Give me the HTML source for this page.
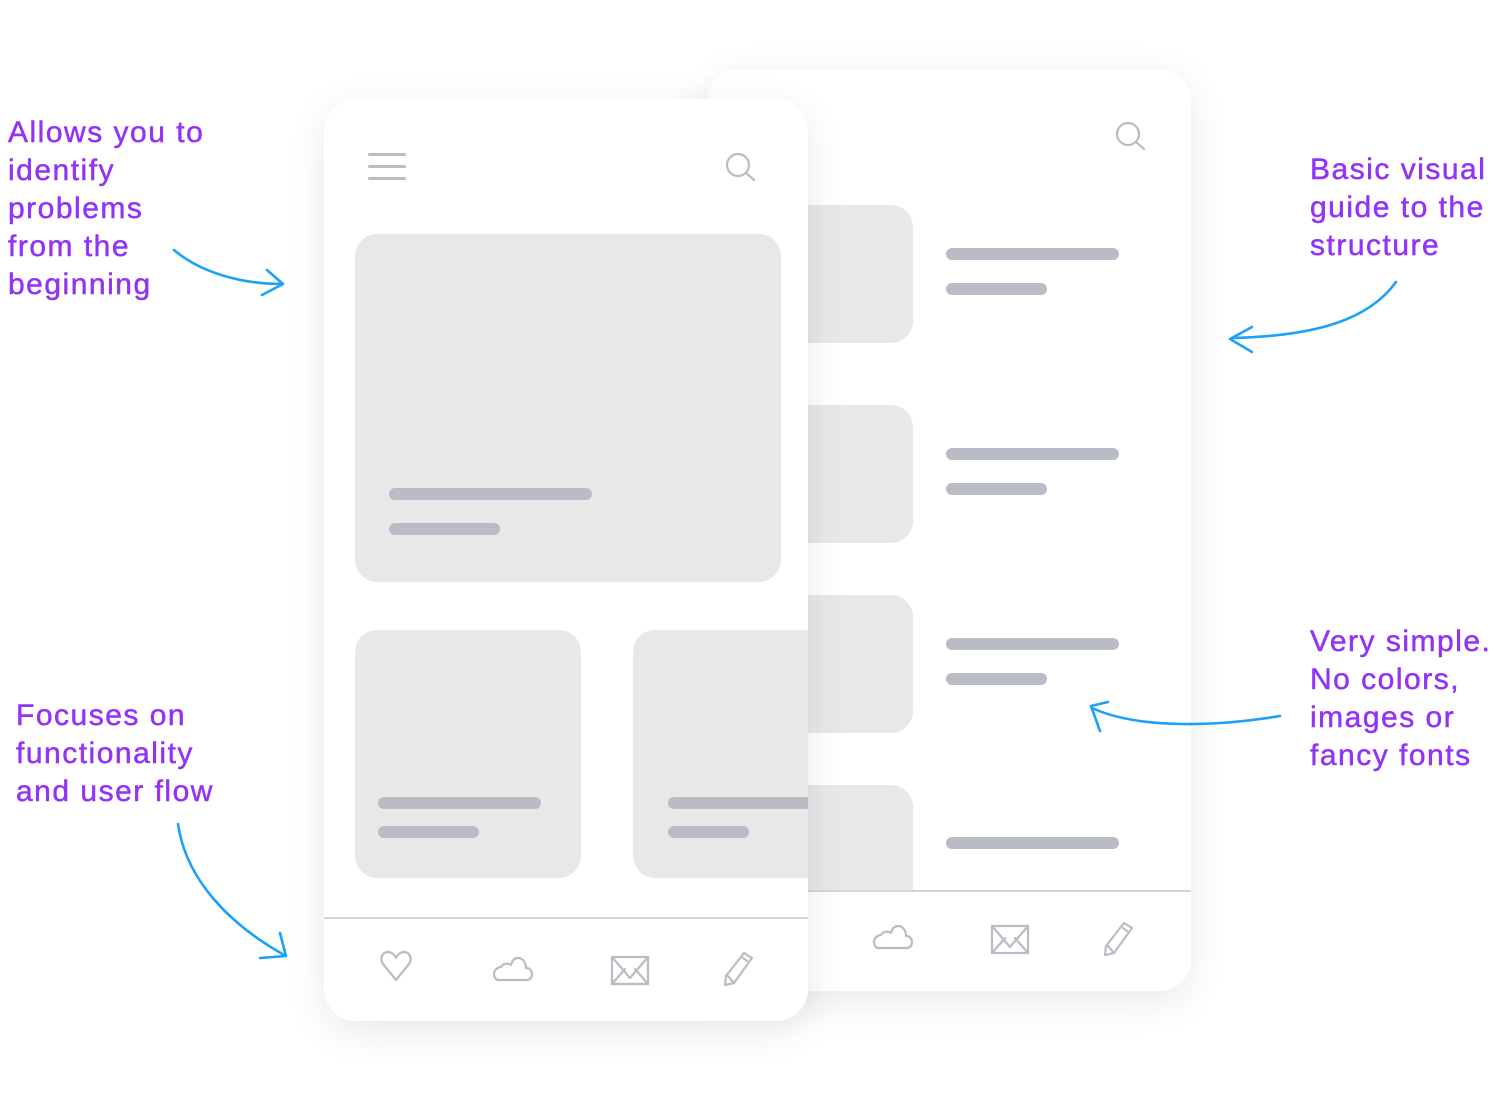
<!DOCTYPE html>
<html><head><meta charset="utf-8"><style>
body{margin:0;width:1500px;height:1100px;background:#fff;position:relative;overflow:hidden;font-family:"Liberation Sans",sans-serif}
.card{position:absolute;background:#fff;border-radius:32px;box-shadow:0 10px 40px rgba(0,0,0,0.09);overflow:hidden}
.t{position:absolute;background:#e8e8e8;border-radius:22px}
.b{position:absolute;background:#babcc5;border-radius:6px;height:12px}
.txt{position:absolute;color:#9333f5;font-size:30px;line-height:38px;letter-spacing:1.5px;white-space:nowrap;-webkit-text-stroke:0.5px #9333f5}
svg.ic{position:absolute;fill:none;stroke:#babcc5;stroke-width:2.2;stroke-linecap:round;stroke-linejoin:round}
</style></head><body>

<div class="card" style="left:707px;top:69px;width:484px;height:922px">
  <div class="t" style="left:-30px;top:136px;width:236px;height:138px"></div>
  <div class="t" style="left:-30px;top:336px;width:236px;height:138px"></div>
  <div class="t" style="left:-30px;top:526px;width:236px;height:138px"></div>
  <div class="t" style="left:-30px;top:716px;width:236px;height:160px"></div>
  <div class="b" style="left:239px;top:179px;width:173px"></div>
  <div class="b" style="left:239px;top:214px;width:101px"></div>
  <div class="b" style="left:239px;top:379px;width:173px"></div>
  <div class="b" style="left:239px;top:414px;width:101px"></div>
  <div class="b" style="left:239px;top:569px;width:173px"></div>
  <div class="b" style="left:239px;top:604px;width:101px"></div>
  <div class="b" style="left:239px;top:768px;width:173px"></div>
  <div style="position:absolute;left:0;top:821px;width:484px;height:101px;background:#fff;border-top:2px solid #d4d5da"></div>
</div>
<svg class="ic" style="left:1112px;top:118px" width="36" height="36" viewBox="0 0 36 36"><circle cx="16" cy="16" r="11"/><path d="M24 24l8 7"/></svg>
<svg class="ic" style="left:870px;top:920px" width="44" height="34" viewBox="0 0 44 34"><path d="M8 28h28c5 0 6-3 6-6 0-3-2-6-6-6 0-5-3-10-8-10-4 0-6 3-7 7-2-2-8-2-10 2-3 0-7 3-7 7 0 3 2 6 4 6z"/></svg>
<svg class="ic" style="left:990px;top:924px" width="40" height="32" viewBox="0 0 40 32"><rect x="2" y="2" width="36" height="27"/><path d="M2 2l18 21 18-21M2 29l13-15M38 29l-13-15"/></svg>
<svg class="ic" style="left:1098px;top:920px" width="38" height="38" viewBox="0 0 38 38"><path d="M26 3l8 5-18 25-9 2 1-9z M10 26l6 7 M25 8l4 3"/></svg>

<div class="card" style="left:324px;top:99px;width:484px;height:922px">
  <div style="position:absolute;left:44px;top:54px;width:38px;height:2.5px;background:#babcc5;border-radius:2px"></div>
  <div style="position:absolute;left:44px;top:66px;width:38px;height:2.5px;background:#babcc5;border-radius:2px"></div>
  <div style="position:absolute;left:44px;top:78px;width:38px;height:2.5px;background:#babcc5;border-radius:2px"></div>
  <div class="t" style="left:31px;top:135px;width:426px;height:348px"></div>
  <div class="b" style="left:65px;top:389px;width:203px"></div>
  <div class="b" style="left:65px;top:424px;width:111px"></div>
  <div class="t" style="left:31px;top:531px;width:226px;height:248px"></div>
  <div class="t" style="left:309px;top:531px;width:226px;height:248px"></div>
  <div class="b" style="left:54px;top:698px;width:163px"></div>
  <div class="b" style="left:54px;top:727px;width:101px"></div>
  <div class="b" style="left:344px;top:698px;width:163px"></div>
  <div class="b" style="left:344px;top:727px;width:81px"></div>
  <div style="position:absolute;left:0;top:818px;width:484px;height:2px;background:#d4d5da"></div>
</div>
<svg class="ic" style="left:722px;top:149px" width="36" height="36" viewBox="0 0 36 36"><circle cx="16" cy="16" r="11"/><path d="M24 24l8 7"/></svg>
<svg class="ic" style="left:378px;top:950px" width="36" height="34" viewBox="0 0 36 34"><path d="M18 30L5 14C1 8 5 2 10 2c4 0 7 3 8 6 1-3 4-6 8-6 5 0 9 6 5 12z"/></svg>
<svg class="ic" style="left:490px;top:952px" width="44" height="34" viewBox="0 0 44 34"><path d="M8 28h28c5 0 6-3 6-6 0-3-2-6-6-6 0-5-3-10-8-10-4 0-6 3-7 7-2-2-8-2-10 2-3 0-7 3-7 7 0 3 2 6 4 6z"/></svg>
<svg class="ic" style="left:610px;top:955px" width="40" height="32" viewBox="0 0 40 32"><rect x="2" y="2" width="36" height="27"/><path d="M2 2l18 21 18-21M2 29l13-15M38 29l-13-15"/></svg>
<svg class="ic" style="left:718px;top:950px" width="38" height="38" viewBox="0 0 38 38"><path d="M26 3l8 5-18 25-9 2 1-9z M10 26l6 7 M25 8l4 3"/></svg>

<div class="txt" style="left:8px;top:114px">Allows you to<br>identify<br>problems<br>from the<br>beginning</div>
<div class="txt" style="left:1310px;top:151px">Basic visual<br>guide to the<br>structure</div>
<div class="txt" style="left:1310px;top:623px">Very simple.<br>No colors,<br>images or<br>fancy fonts</div>
<div class="txt" style="left:16px;top:697px">Focuses on<br>functionality<br>and user flow</div>

<svg style="position:absolute;left:0;top:0" width="1500" height="1100" fill="none" stroke="#1da1f7" stroke-width="2.6" stroke-linecap="round" stroke-linejoin="round">
  <path d="M174 250C200 272 240 284 282 284M267 270l16 14-21 11"/>
  <path d="M1396 282C1370 318 1320 336 1232 338M1252 327l-22 12 22 13"/>
  <path d="M1280 716C1220 726 1140 730 1092 708M1108 702l-17 4 9 25"/>
  <path d="M178 824C186 880 230 925 286 956M280 933l6 23-26 2"/>
</svg>
</body></html>
